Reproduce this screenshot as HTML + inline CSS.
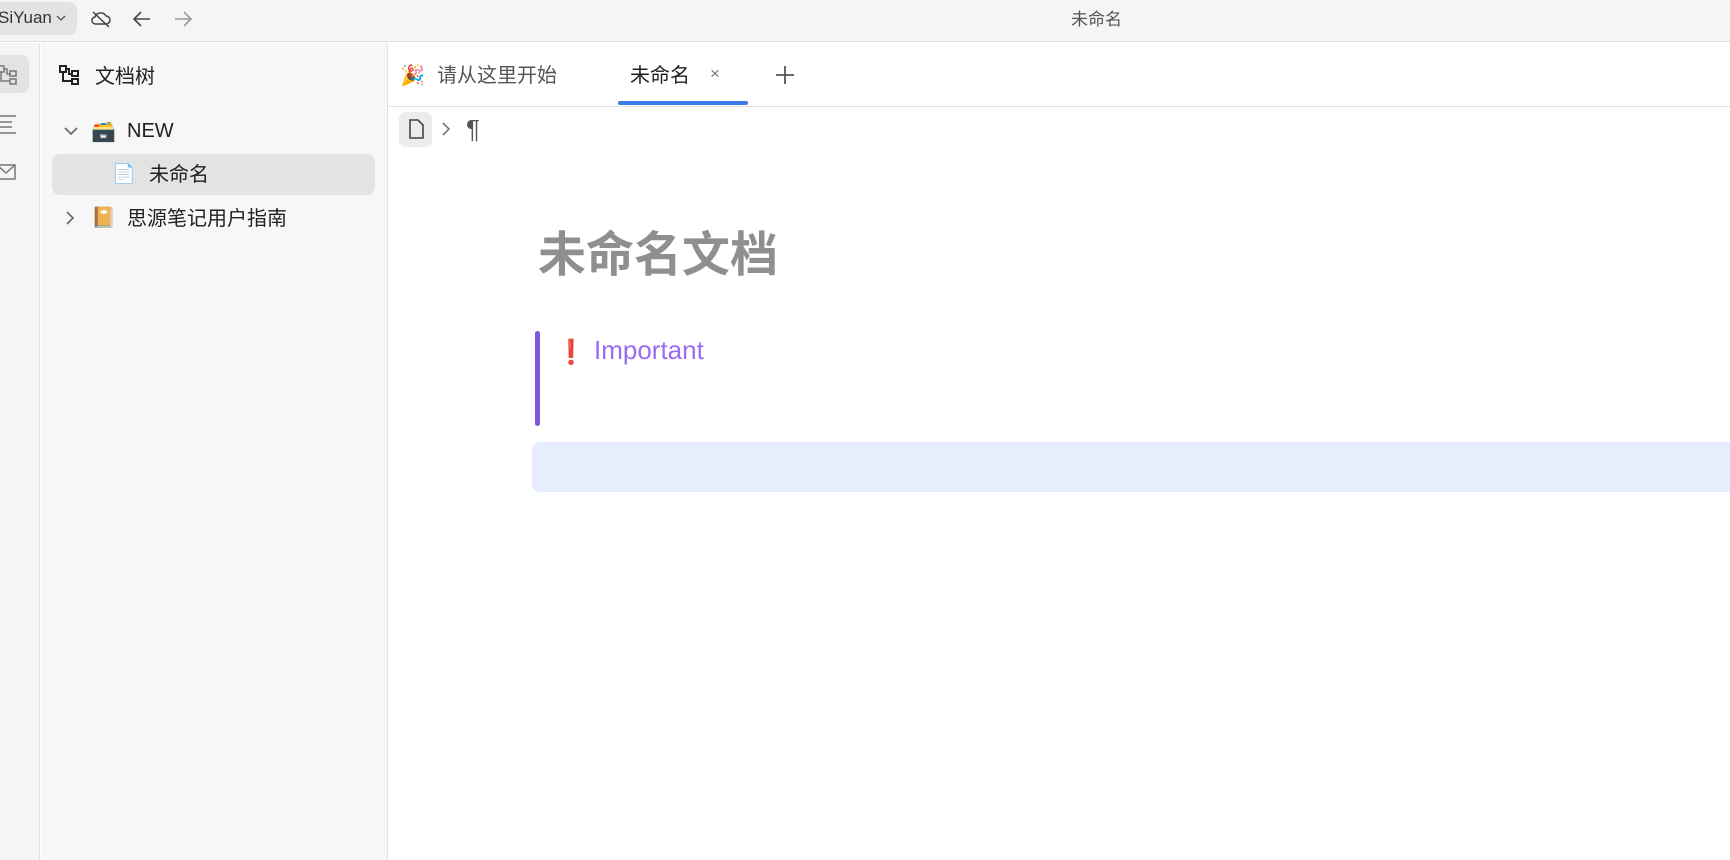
<!DOCTYPE html>
<html><head><meta charset="utf-8"><style>
*{margin:0;padding:0;box-sizing:border-box}
body{width:1730px;height:860px;overflow:hidden;background:#fff;font-family:"Liberation Sans","Noto Sans CJK SC",sans-serif;color:#202124;position:relative}
.a{position:absolute;white-space:nowrap}
</style></head><body>
<div class="a" style="left:0;top:0;width:1730px;height:42px;background:#f5f5f5;border-bottom:1px solid #e0e0e0"></div>
<div class="a" style="left:0;top:2px;width:77px;height:33px;background:#e3e3e3;border-radius:0 8px 8px 0"></div>
<div class="a" style="left:-2px;top:8px;font-size:17px;color:#333">SiYuan</div>
<svg class="a" style="left:55px;top:13px" width="12" height="10"><path d="M2 3l4 4 4-4" fill="none" stroke="#555" stroke-width="1.3"/></svg>
<svg class="a" style="left:90px;top:8px" width="22" height="22" viewBox="0 0 22 22"><path d="M6 16h10a4 4 0 0 0 0-8 6 6 0 0 0-11 1 3.5 3.5 0 0 0 1 7z M3 4l16 15" fill="none" stroke="#444" stroke-width="1.5"/></svg>
<svg class="a" style="left:131px;top:8px" width="22" height="22"><path d="M19 11H4M10 4l-7 7 7 7" fill="none" stroke="#444" stroke-width="1.6"/></svg>
<svg class="a" style="left:172px;top:8px" width="22" height="22"><path d="M3 11h15M12 4l7 7-7 7" fill="none" stroke="#999" stroke-width="1.6"/></svg>
<div class="a" style="left:1071px;top:5px;font-size:17px;color:#555">未命名</div>

<div class="a" style="left:0;top:43px;width:40px;height:817px;background:#f5f5f5;border-right:1px solid #e0e0e0"></div>
<div class="a" style="left:0;top:55px;width:29px;height:38px;background:#e3e3e3;border-radius:0 8px 8px 0"></div>
<svg class="a" style="left:-4px;top:64px" width="24" height="22"><path d="M2 2h6v6H2zM14 7h6v5h-6zM14 15h6v5h-6zM5 8v9h9M8 5h3v5h3" fill="none" stroke="#777" stroke-width="1.5"/></svg>
<svg class="a" style="left:-4px;top:113px" width="24" height="22"><path d="M0 3h20M4 9h12M4 14h12M0 20h20" fill="none" stroke="#777" stroke-width="1.6"/></svg>
<svg class="a" style="left:-4px;top:163px" width="24" height="20"><path d="M1 2h18v14H1zM1 2l9 8 9-8" fill="none" stroke="#777" stroke-width="1.5"/></svg>

<div class="a" style="left:41px;top:43px;width:347px;height:817px;background:#f7f7f7;border-right:1px solid #e0e0e0"></div>
<svg class="a" style="left:58px;top:64px" width="24" height="22"><path d="M2 2h6v6H2zM14 7h6v5h-6zM14 15h6v5h-6zM5 8v9h9M8 5h3v5h3" fill="none" stroke="#222" stroke-width="2"/></svg>
<div class="a" style="left:95px;top:60px;font-size:20px">文档树</div>
<svg class="a" style="left:63px;top:124px" width="16" height="14"><path d="M2 4l6 6 6-6" fill="none" stroke="#666" stroke-width="1.6"/></svg>
<div class="a" style="left:91px;top:119px;font-size:20px">🗃️</div>
<div class="a" style="left:127px;top:120px;font-size:20px">NEW</div>
<div class="a" style="left:52px;top:154px;width:323px;height:41px;background:#e3e3e3;border-radius:8px"></div>
<div class="a" style="left:112px;top:162px;font-size:19px">📄</div>
<div class="a" style="left:149px;top:158px;font-size:20px">未命名</div>
<svg class="a" style="left:63px;top:210px" width="14" height="16"><path d="M4 2l6 6-6 6" fill="none" stroke="#666" stroke-width="1.6"/></svg>
<div class="a" style="left:91px;top:205px;font-size:20px">📔</div>
<div class="a" style="left:127px;top:202px;font-size:20px">思源笔记用户指南</div>

<div class="a" style="left:389px;top:106px;width:1341px;height:1px;background:#e0e0e0"></div>
<div class="a" style="left:400px;top:63px;font-size:20px">🎉</div>
<div class="a" style="left:437px;top:59px;font-size:20px;color:#555">请从这里开始</div>
<div class="a" style="left:630px;top:59px;font-size:20px">未命名</div>
<div class="a" style="left:710px;top:64px;font-size:17px;color:#777">×</div>
<div class="a" style="left:618px;top:101px;width:130px;height:4px;background:#3b7ae8;border-radius:2px"></div>
<svg class="a" style="left:774px;top:64px" width="22" height="22"><path d="M11 2v18M2 11h18" stroke="#555" stroke-width="1.8"/></svg>
<div class="a" style="left:399px;top:112px;width:33px;height:35px;background:#ececec;border-radius:7px"></div>
<svg class="a" style="left:406px;top:118px" width="20" height="22"><path d="M4 2h8l5 5v13H4z" fill="none" stroke="#444" stroke-width="1.6"/></svg>
<svg class="a" style="left:440px;top:121px" width="12" height="16"><path d="M3 2l6 6-6 6" fill="none" stroke="#777" stroke-width="1.6"/></svg>
<div class="a" style="left:466px;top:114px;font-size:26px;color:#555">¶</div>

<div class="a" style="left:538px;top:232px;font-size:48px;font-weight:bold;color:#8f8f8f;line-height:1">未命名文档</div>
<div class="a" style="left:535px;top:331px;width:5px;height:95px;background:#7e57dc;border-radius:3px"></div>
<div class="a" style="left:556px;top:338px;font-size:24px;color:#e33">❗</div>
<div class="a" style="left:594px;top:335px;font-size:26px;color:#9b6cf0">Important</div>
<div class="a" style="left:532px;top:442px;width:1210px;height:50px;background:#e6edfc;border-radius:8px"></div>
</body></html>
